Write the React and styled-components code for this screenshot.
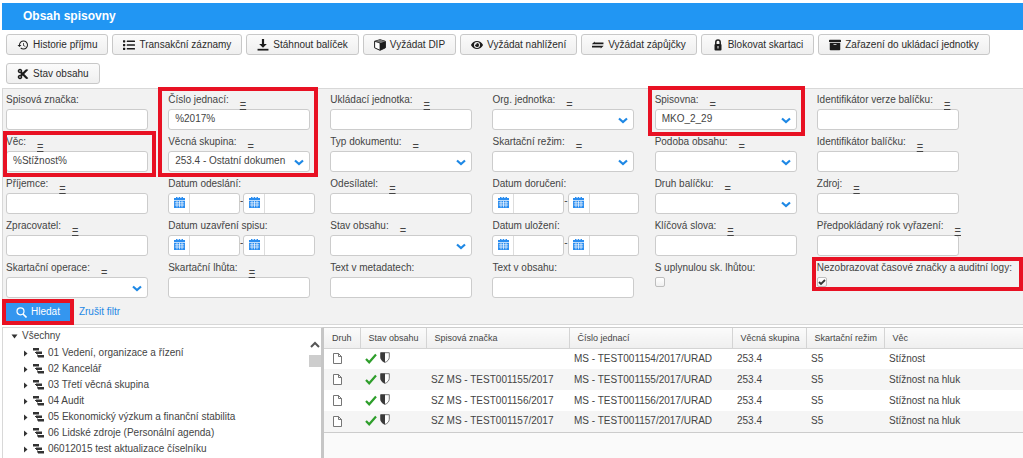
import React from "react";
import styled, { createGlobalStyle, css } from "styled-components";
import { MdHistory } from "react-icons/md";
import { FaList, FaEye, FaArchive, FaCut } from "react-icons/fa";

const GlobalStyle = createGlobalStyle`
  * {
    box-sizing: border-box;
  }

  body {
    margin: 0;
    background-color: #ffffff;
    color: #444444;
    font-family: "Liberation Sans", Arial, sans-serif;
    font-size: 10px;
    line-height: 12px;
  }

  button,
  input,
  select {
    font: inherit;
    color: inherit;
  }
`;

const Page = styled.div`
  display: flex;
  flex-direction: column;
  min-height: 100vh;
  padding: 3px 0 0 2px;
  overflow: hidden;
`;

const Title = styled.h1`
  margin: 0;
  padding: 0 21px;
  background-color: #2196f3;
  color: white;
  font-size: 12px;
  font-weight: 700;
  line-height: 27px;
`;

const Toolbar = styled.div`
  display: flex;
  flex-wrap: wrap;
  gap: 8px 4px;
  padding: 4px 20px 4px 4px;
`;

const ToolButton = styled.button`
  display: flex;
  align-items: center;
  gap: 4px;
  height: 21px;
  padding: 0 10px;
  border: 1px solid #c8c8c8;
  border-radius: 3px;
  background: linear-gradient(#fbfbfb, #efefef);
  color: #2b2b2b;

  svg {
    width: 12px;
    height: 12px;
    color: #1c1c1c;
  }
`;

const Filter = styled.form`
  display: flex;
  flex-direction: column;
  padding: 4px 0 3px 3px;
  border: 1px solid #d8d8d8;
  border-right: 0;
  background-color: #f2f2f2;
`;

const FieldGrid = styled.div`
  display: grid;
  grid-template-columns: repeat(5, minmax(0, 162fr)) minmax(0, 206fr);
  grid-auto-rows: 42px;
`;

const marked = css`
  &::after {
    content: "";
    position: absolute;
    border: 4px solid #e81123;
    pointer-events: none;
    z-index: 1;
  }
`;

const marks = {
  tall: css`
    ${marked}
    &::after {
      inset: -6px 12px -42px -10px;
    }
  `,
  wide: css`
    ${marked}
    &::after {
      inset: -4px 12px 0 -3px;
    }
  `,
  single: css`
    ${marked}
    &::after {
      inset: -7px 12px -1px -7px;
    }
  `,
  check: css`
    ${marked}
    &::after {
      inset: -4px 0 12px -5px;
    }
  `,
};

const Field = styled.div`
  position: relative;
  ${(props) => props.$mark && marks[props.$mark]}
`;

const LabelRow = styled.div`
  display: flex;
  gap: 11px;
  height: 16px;
  line-height: 14px;
  white-space: nowrap;
`;

const Operator = styled.button`
  align-self: flex-end;
  padding: 0;
  border: 0;
  background: none;
  font-size: 11px;
  line-height: 10px;
  text-decoration: underline;
`;

const control = css`
  width: 142px;
  max-width: 100%;
  height: 21px;
  padding: 0 6px 2px;
  border: 1px solid #cccccc;
  border-radius: 3px;
  background-color: white;
`;

const TextInput = styled.input`
  display: block;
  ${control}
`;

const SelectBox = styled.div`
  position: relative;
  width: 142px;
  max-width: 100%;

  svg {
    position: absolute;
    top: 8px;
    right: 6px;
    width: 10px;
    height: 7px;
    pointer-events: none;
  }
`;

const Select = styled.select`
  display: block;
  ${control}
  padding-right: 19px;
  appearance: none;
`;

const DateRange = styled.div`
  display: flex;
  width: 147px;
  line-height: 16px;
`;

const DateBox = styled.div`
  display: flex;
  flex: 1;
  min-width: 0;
  height: 21px;
  border: 1px solid #cccccc;
  border-radius: 3px;
  background-color: white;
`;

const DateButton = styled.button`
  display: flex;
  align-items: center;
  justify-content: center;
  width: 21px;
  padding: 0 0 2px;
  border: 0;
  border-right: 1px solid #dddddd;
  background: none;
`;

const DateInput = styled.input`
  flex: 1;
  min-width: 0;
  padding: 0 3px;
  border: 0;
  background: none;
`;

const CheckWrap = styled.div`
  position: relative;
  width: 10px;

  svg {
    position: absolute;
    top: 1px;
    left: 1px;
    pointer-events: none;
  }
`;

const Checkbox = styled.input`
  display: block;
  width: 10px;
  height: 10px;
  margin: 0;
  border: 1px solid #bdbdbd;
  border-radius: 2px;
  background: linear-gradient(#ffffff, #f0f0f0);
  appearance: none;
`;

const Actions = styled.div`
  display: flex;
  align-items: center;
  gap: 9px;
`;

const SearchMark = styled.div`
  position: relative;
  ${marked}
  &::after {
    inset: -4px;
  }
`;

const SearchButton = styled.button`
  display: flex;
  align-items: center;
  gap: 4px;
  height: 18px;
  padding: 0 10px;
  border: 0;
  background-color: #3496ef;
  color: white;
`;

const ResetLink = styled.a`
  color: #1e88e5;
  text-decoration: none;
`;

const Content = styled.main`
  display: flex;
  flex: 1;
  margin-top: 2px;
`;

const TreePane = styled.nav`
  display: flex;
  flex: 0 0 322px;
  border: 1px solid #d8d8d8;
  border-right: 3px solid #c6c6c6;
  border-bottom: 0;
`;

const Tree = styled.ul`
  flex: 1;
  margin: 0;
  padding: 0 0 0 8px;
  list-style: none;

  ul {
    margin: 0;
    padding: 1px 0 0 11px;
    list-style: none;
  }
`;

const TreeItem = styled.div`
  display: flex;
  align-items: center;
  gap: 4px;
  height: 16px;
  white-space: nowrap;
`;

const Scrollbar = styled.div`
  display: flex;
  flex-direction: column;
  align-items: center;
  width: 13px;
  padding-top: 13px;
`;

const Thumb = styled.div`
  width: 12px;
  height: 12px;
  margin-top: 7px;
  background-color: #cdcdcd;
`;

const GridPane = styled.section`
  flex: 1;
  min-width: 0;
  background-color: #fafafa;
  border-top: 1px solid #cccccc;
`;

const Table = styled.table`
  width: 100%;
  border-collapse: collapse;
  table-layout: fixed;
  background-color: white;
  border-bottom: 1px solid #cccccc;
`;

const HeadCell = styled.th`
  width: ${(props) => props.$width};
  height: 20px;
  padding: 0 0 0 8px;
  border-right: 1px solid #d4d4d4;
  border-bottom: 1px solid #d4d4d4;
  background: linear-gradient(#fbfbfb, #efefef);
  font-size: 9px;
  font-weight: 400;
  text-align: left;
  white-space: nowrap;

  &:last-child {
    border-right: 0;
  }
`;

const Row = styled.tr`
  height: 21px;

  &:nth-child(even) {
    background-color: #f5f5f5;
  }
`;

const Cell = styled.td`
  padding: 0 0 0 5px;
  white-space: nowrap;
`;

const KindCell = styled(Cell)`
  padding-left: 9px;

  svg {
    display: block;
  }
`;

const Status = styled.div`
  display: flex;
  gap: 3px;
  padding-bottom: 2px;
`;

const DownloadIcon = () => (
  <svg viewBox="0 0 11 11" fill="currentColor">
    <path d="M4.500 0h2v4.500H9L5.500 8 2 4.500h2.500z" />
    <path d="M.5 9h10v1.600H.5z" />
  </svg>
);

const BoxIcon = () => (
  <svg viewBox="0 0 12 12">
    <path
      d="M.6 2.300L6 .700l5.400 1.600v6.500L6 11.300.6 8.800z"
      fill="white"
      stroke="currentColor"
      strokeWidth="1"
    />
    <path d="M.6 2.300L6 .700l5.400 1.600L6 4z" fill="#777777" />
    <path d="M6 4l5.400-1.700v6.500L6 11.300z" fill="currentColor" />
    <path d="M.6 2.300L6 4v7" fill="none" stroke="currentColor" strokeWidth=".8" />
  </svg>
);

const ExchangeIcon = () => (
  <svg viewBox="0 0 11 11" fill="currentColor">
    <path d="M0 4.500L2.500 2.300v.9h8v1.500H0zM10.500 6.500L8 8.700v-.9H0V6.300h10.500z" />
  </svg>
);

const LockIcon = () => (
  <svg viewBox="0 0 12 12">
    <path
      d="M3.800 5.500V3.300a2.200 2.200 0 0 1 4.400 0v2.200"
      fill="none"
      stroke="currentColor"
      strokeWidth="1.500"
    />
    <rect x="2.500" y="5" width="7" height="6.500" rx="1" fill="currentColor" />
    <path d="M5.500 7h1v2.500h-1z" fill="white" />
  </svg>
);

const ChevronIcon = () => (
  <svg viewBox="0 0 10 7" fill="none" stroke="#1e88e5" strokeWidth="2.200">
    <path d="M1 1.500l4 3.500 4-3.500" />
  </svg>
);

const CalendarIcon = () => (
  <svg width="11" height="11" viewBox="0 0 11 11">
    <path
      fill="#2a8df0"
      d="M2 0h1.500v1H4.700V0h1.500v1H7.500V0H9v1h2v10H0V1h2z"
    />
    <path
      stroke="white"
      strokeWidth="0.700"
      d="M0 3.500h11M.8 5.800h9.400M.8 8h9.400M3 4v6.300M5.500 4v6.300M8 4v6.300"
    />
  </svg>
);

const SearchIcon = () => (
  <svg width="11" height="11" viewBox="0 0 11 11" fill="none" stroke="white">
    <circle cx="4.500" cy="4.300" r="3.500" strokeWidth="1.200" />
    <path d="M7 7l3.500 3.500" strokeWidth="1.600" />
  </svg>
);

const TickIcon = () => (
  <svg width="8" height="8" viewBox="0 0 8 8" fill="none" stroke="#333333">
    <path d="M1 4l2 2 4-4" strokeWidth="1.800" />
  </svg>
);

const ArrowIcon = ({ open }) => (
  <svg width="7" height="7" viewBox="0 0 7 7" fill="#333333">
    <path d={open ? "M.5 1.500h6L3.500 5.500z" : "M2 .5v6L5.500 3.500z"} />
  </svg>
);

const NodeIcon = () => (
  <svg width="11" height="10" viewBox="0 0 11 10" fill="#333333">
    <path d="M0 0h6v2.500H0zM3 3.500h6V6H3zM5 7h6v2.500H5z" />
    <path d="M1 2h1v3h2v3.500h2v-1H4.500V4H2V2z" />
  </svg>
);

const DocumentIcon = () => (
  <svg
    width="9"
    height="11"
    viewBox="0 0 9 11"
    fill="white"
    stroke="#666666"
    strokeWidth="0.900"
  >
    <path d="M.5.5h5l3 3v7h-8zM5.500.5v3h3" />
  </svg>
);

const OkIcon = () => (
  <svg width="12" height="12" viewBox="0 0 12 12" fill="none" stroke="#2e9e2b">
    <path d="M1 7l3.200 3.300L11 2.500" strokeWidth="2.200" />
  </svg>
);

const ShieldIcon = () => (
  <svg width="10" height="11" viewBox="0 0 10 11">
    <path
      d="M.7.700h8.600v4.500c0 2.500-2 4.300-4.300 5.200C2.700 9.500.7 7.700.7 5.200z"
      fill="white"
      stroke="#666666"
      strokeWidth="0.900"
    />
    <path d="M.5.500H5v10C2.500 9.500.5 7.700.5 5.200z" fill="#3a3a3a" />
  </svg>
);

const tools = [
  { icon: <MdHistory />, text: "Historie příjmu" },
  { icon: <FaList />, text: "Transakční záznamy" },
  { icon: <DownloadIcon />, text: "Stáhnout balíček" },
  { icon: <BoxIcon />, text: "Vyžádat DIP" },
  { icon: <FaEye />, text: "Vyžádat nahlížení" },
  { icon: <ExchangeIcon />, text: "Vyžádat zápůjčky" },
  { icon: <LockIcon />, text: "Blokovat skartaci" },
  { icon: <FaArchive />, text: "Zařazení do ukládací jednotky" },
  { icon: <FaCut />, text: "Stav obsahu" },
];

const fields = [
  { id: "znacka", label: "Spisová značka:" },
  { id: "cislo", label: "Číslo jednací:", op: true, value: "%2017%", mark: "tall" },
  { id: "ukladaci", label: "Ukládací jednotka:", op: true },
  { id: "org", label: "Org. jednotka:", op: true, type: "select" },
  { id: "spisovna", label: "Spisovna:", op: true, type: "select", value: "MKO_2_29", mark: "single" },
  { id: "verze", label: "Identifikátor verze balíčku:", op: true },

  { id: "vec", label: "Věc:", op: true, value: "%Stížnost%", mark: "wide" },
  { id: "skupina", label: "Věcná skupina:", op: true, type: "select", value: "253.4 - Ostatní dokumen" },
  { id: "typ", label: "Typ dokumentu:", op: true, type: "select" },
  { id: "rezim", label: "Skartační režim:", op: true, type: "select" },
  { id: "podoba", label: "Podoba obsahu:", op: true, type: "select" },
  { id: "balicek", label: "Identifikátor balíčku:", op: true },

  { id: "prijemce", label: "Příjemce:", op: true },
  { id: "odeslani", label: "Datum odeslání:", type: "date" },
  { id: "odesilatel", label: "Odesílatel:", op: true },
  { id: "doruceni", label: "Datum doručení:", type: "date" },
  { id: "druh", label: "Druh balíčku:", op: true, type: "select" },
  { id: "zdroj", label: "Zdroj:", op: true },

  { id: "zpracovatel", label: "Zpracovatel:", op: true },
  { id: "uzavreni", label: "Datum uzavření spisu:", type: "date" },
  { id: "stav", label: "Stav obsahu:", op: true, type: "select" },
  { id: "ulozeni", label: "Datum uložení:", type: "date" },
  { id: "slova", label: "Klíčová slova:", op: true },
  { id: "rok", label: "Předpokládaný rok vyřazení:", op: true },

  { id: "operace", label: "Skartační operace:", op: true, type: "select" },
  { id: "lhuta", label: "Skartační lhůta:", op: true },
  { id: "metadata", label: "Text v metadatech:" },
  { id: "obsah", label: "Text v obsahu:" },
  { id: "uplynula", label: "S uplynulou sk. lhůtou:", type: "check" },
  { id: "logy", label: "Nezobrazovat časové značky a auditní logy:", type: "check", value: true, mark: "check" },
];

const groups = [
  "01 Vedení, organizace a řízení",
  "02 Kancelář",
  "03 Třetí věcná skupina",
  "04 Audit",
  "05 Ekonomický výzkum a finanční stabilita",
  "06 Lidské zdroje (Personální agenda)",
  "06012015 test aktualizace číselníku",
];

const columns = [
  { name: "Druh", width: "36px" },
  { name: "Stav obsahu", width: "66px" },
  { name: "Spisová značka", width: "143px" },
  { name: "Číslo jednací", width: "163px" },
  { name: "Věcná skupina", width: "74px" },
  { name: "Skartační režim", width: "78px" },
  { name: "Věc", width: "auto" },
];

const rows = [
  ["", "MS - TEST001154/2017/URAD", "253.4", "S5", "Stížnost"],
  ["SZ MS - TEST001155/2017", "MS - TEST001155/2017/URAD", "253.4", "S5", "Stížnost na hluk"],
  ["SZ MS - TEST001156/2017", "MS - TEST001156/2017/URAD", "253.4", "S5", "Stížnost na hluk"],
  ["SZ MS - TEST001157/2017", "MS - TEST001157/2017/URAD", "253.4", "S5", "Stížnost na hluk"],
];

const DatePart = ({ id, label }) => (
  <DateBox>
    <DateButton type="button" aria-label="Kalendář">
      <CalendarIcon />
    </DateButton>
    <DateInput id={id} aria-label={label} />
  </DateBox>
);

const FieldControl = ({ id, label, type, value }) => {
  if (type === "select") {
    return (
      <SelectBox>
        <Select id={id} defaultValue={value || ""}>
          <option value={value || ""}>{value || ""}</option>
        </Select>
        <ChevronIcon />
      </SelectBox>
    );
  }

  if (type === "date") {
    return (
      <DateRange>
        <DatePart id={id} label={label} />
        -
        <DatePart id={`${id}-do`} label={label} />
      </DateRange>
    );
  }

  if (type === "check") {
    return (
      <CheckWrap>
        <Checkbox id={id} type="checkbox" defaultChecked={value} />
        {value && <TickIcon />}
      </CheckWrap>
    );
  }

  return <TextInput id={id} type="text" defaultValue={value} />;
};

const App = () => {
  return (
    <>
      <GlobalStyle />
      <Page>
        <Title>Obsah spisovny</Title>

        <Toolbar>
          {tools.map((tool) => (
            <ToolButton key={tool.text} type="button">
              {tool.icon}
              {tool.text}
            </ToolButton>
          ))}
        </Toolbar>

        <Filter>
          <FieldGrid>
            {fields.map((field) => (
              <Field key={field.id} $mark={field.mark}>
                <LabelRow>
                  <label htmlFor={field.id}>{field.label}</label>
                  {field.op && <Operator type="button">=</Operator>}
                </LabelRow>
                <FieldControl {...field} />
              </Field>
            ))}
          </FieldGrid>

          <Actions>
            <SearchMark>
              <SearchButton type="button">
                <SearchIcon />
                Hledat
              </SearchButton>
            </SearchMark>
            <ResetLink href="#">Zrušit filtr</ResetLink>
          </Actions>
        </Filter>

        <Content>
          <TreePane>
            <Tree>
              <li>
                <TreeItem>
                  <ArrowIcon open />
                  Všechny
                </TreeItem>
                <ul>
                  {groups.map((group) => (
                    <li key={group}>
                      <TreeItem>
                        <ArrowIcon />
                        <NodeIcon />
                        {group}
                      </TreeItem>
                    </li>
                  ))}
                </ul>
              </li>
            </Tree>
            <Scrollbar>
              <svg width="10" height="7" viewBox="0 0 10 7" fill="none" stroke="#555555">
                <path d="M1 6l4-4 4 4" strokeWidth="2" />
              </svg>
              <Thumb />
            </Scrollbar>
          </TreePane>

          <GridPane>
            <Table>
              <thead>
                <tr>
                  {columns.map((column) => (
                    <HeadCell key={column.name} $width={column.width}>
                      {column.name}
                    </HeadCell>
                  ))}
                </tr>
              </thead>
              <tbody>
                {rows.map((row) => (
                  <Row key={row[1]}>
                    <KindCell>
                      <DocumentIcon />
                    </KindCell>
                    <Cell>
                      <Status>
                        <OkIcon />
                        <ShieldIcon />
                      </Status>
                    </Cell>
                    {row.map((text, index) => (
                      <Cell key={index}>{text}</Cell>
                    ))}
                  </Row>
                ))}
              </tbody>
            </Table>
          </GridPane>
        </Content>
      </Page>
    </>
  );
};

export default App;
